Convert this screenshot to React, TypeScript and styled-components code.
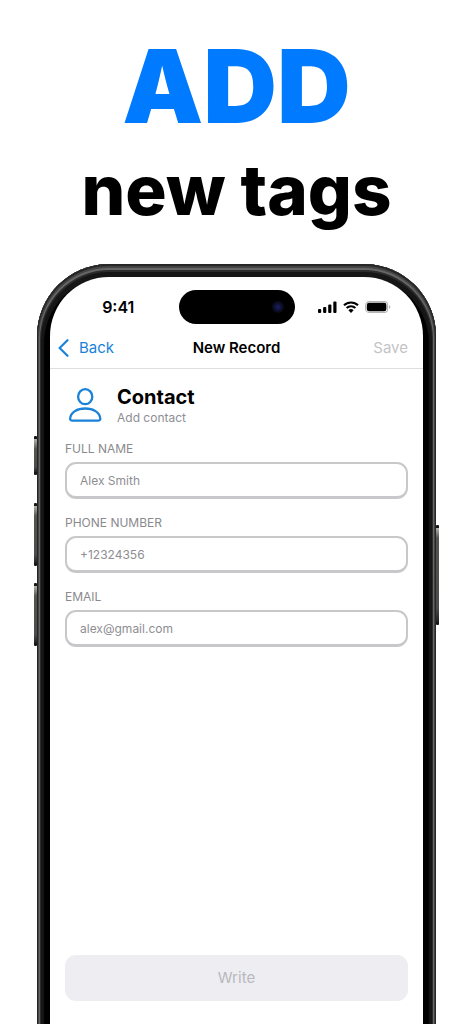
import React from "react";
import styled, { createGlobalStyle } from "styled-components";

const GlobalStyle = createGlobalStyle`
  * { box-sizing: border-box; }
  body {
    margin: 0;
    background: #ffffff;
    color: #000000;
    font-family: Inter, "Liberation Sans", sans-serif;
  }
`;

const Page = styled.main`
  display: flex;
  flex-direction: column;
  min-height: 100vh;
  overflow: hidden;
`;

const Headline = styled.h1`
  display: flex;
  flex-direction: column;
  align-items: center;
  margin: 0;
  padding: 34px 0 22px;
  white-space: nowrap;
`;

const HeadlineAccent = styled.span`
  font-size: 102px;
  line-height: 104px;
  font-weight: 900;
  color: #007aff;
`;

const HeadlineText = styled.span`
  font-size: 69px;
  line-height: 104px;
  font-weight: 800;
`;

const Phone = styled.section`
  position: relative;
  flex: 1;
  display: flex;
  margin: 0 37px;
  padding: 13px 13px 0;
  border-radius: 72px 72px 0 0;
  background: #000000;
  box-shadow:
    inset 0 1px 0 1px #262626,
    inset 0 2px 0 2px #444444,
    inset 0 3px 0 3px #666666,
    inset 0 4px 0 4px #2c2c2c,
    inset 0 7px 1px 7px #161616;
`;

const SideKey = styled.span<{ $side: "left" | "right"; $top: number; $length: number }>`
  position: absolute;
  ${(p) => p.$side}: -3px;
  top: ${(p) => p.$top}px;
  width: 3px;
  height: ${(p) => p.$length}px;
  border: solid #161616;
  border-width: 3px 0;
  border-radius: 1px;
  background: linear-gradient(#b5b5b0, #55544f 10px, #4c4c4a 85%, #222222);
`;

const Screen = styled.div`
  flex: 1;
  display: flex;
  flex-direction: column;
  min-width: 0;
  border-radius: 59px 59px 0 0;
  background: #ffffff;
`;

const StatusBar = styled.div`
  display: grid;
  grid-template-columns: 1fr 116px 1fr;
  align-items: center;
  padding-top: 13px;
`;

const Time = styled.time`
  padding-left: 8px;
  text-align: center;
  font-size: 16px;
  line-height: 20px;
  font-weight: 600;
`;

const Island = styled.div`
  display: flex;
  align-items: center;
  justify-content: flex-end;
  height: 34px;
  padding-right: 11px;
  border-radius: 17px;
  background: #000000;
`;

const Camera = styled.span`
  width: 12px;
  height: 12px;
  border-radius: 50%;
  background: radial-gradient(circle, #1b1f6b 0, #10123a 35%, #0a0a1a 60%, #07070c 100%);
`;

const StatusIcons = styled.div`
  display: flex;
  align-items: center;
  justify-content: center;
  gap: 6px;
  padding-right: 9px;
`;

const NavBar = styled.header`
  display: grid;
  grid-template-columns: 1fr auto 1fr;
  align-items: center;
  height: 45px;
  padding: 4px 15px 0 8px;
  border-bottom: 1px solid #dedee0;
`;

const NavLink = styled.a`
  display: flex;
  align-items: center;
  gap: 10px;
  font-size: 15px;
  line-height: 20px;
  color: #1a82d8;
  text-decoration: none;
`;

const NavTitle = styled.h2`
  margin: 0;
  padding-left: 7px;
  font-size: 15px;
  line-height: 20px;
  font-weight: 600;
`;

const SaveButton = styled.button`
  justify-self: end;
  padding: 0;
  border: 0;
  background: none;
  font: inherit;
  font-size: 15px;
  line-height: 20px;
  color: #c4c4c6;
`;

const Form = styled.form`
  flex: 1;
  display: flex;
  flex-direction: column;
  padding: 16px 15px 23px;
`;

const Intro = styled.div`
  display: flex;
  align-items: center;
  gap: 15px;
  height: 42px;
  padding-left: 4px;
`;

const IntroTitle = styled.h3`
  margin: 0;
  font-size: 20px;
  line-height: 24px;
  font-weight: 700;
`;

const IntroText = styled.p`
  margin: 0;
  font-size: 12px;
  line-height: 18px;
  color: #8e8e93;
`;

const Fields = styled.div`
  display: flex;
  flex-direction: column;
  gap: 17px;
  margin: 15px 0 auto;
`;

const Field = styled.label`
  display: flex;
  flex-direction: column;
  gap: 6px;
  font-size: 12px;
  line-height: 14px;
  color: #8a8a8e;
`;

const Input = styled.input`
  width: 100%;
  height: 37px;
  padding: 0 13px;
  border: 2px solid #c8c8cb;
  border-bottom-width: 3px;
  border-radius: 11px;
  background: #ffffff;
  font: inherit;
  font-size: 12px;
  color: #000000;
  outline: none;

  &::placeholder {
    color: #8e8e92;
    opacity: 1;
  }
`;

const WriteButton = styled.button`
  height: 46px;
  border: 0;
  border-radius: 11px;
  background: #eeedf2;
  font: inherit;
  font-size: 15px;
  line-height: 20px;
  color: #b9b9bd;
`;

const SignalIcon = () => (
  <svg width="19" height="12" viewBox="0 0 19 12" aria-hidden="true">
    <rect x="0" y="8" width="3.2" height="4" rx="1" />
    <rect x="5.1" y="6" width="3.2" height="6" rx="1" />
    <rect x="10.2" y="3.4" width="3.2" height="8.6" rx="1" />
    <rect x="15.3" y="0.4" width="3.2" height="11.6" rx="1" />
  </svg>
);

const WifiIcon = () => (
  <svg width="16" height="12" viewBox="0 0 16 12" aria-hidden="true">
    <path d="M1 4.3A10 10 0 0 1 15 4.3" fill="none" stroke="#000" strokeWidth="2.1" />
    <path d="M3.6 7A6.3 6.3 0 0 1 12.4 7" fill="none" stroke="#000" strokeWidth="2" />
    <path d="M8 12 5.4 9.3a3.8 3.8 0 0 1 5.2 0Z" />
  </svg>
);

const BatteryIcon = () => (
  <svg width="26" height="12" viewBox="0 0 26 12" aria-hidden="true">
    <rect x="0.6" y="0.6" width="22" height="10.8" rx="3.4" fill="none" stroke="#b5b5b5" strokeWidth="1.1" />
    <rect x="1.8" y="1.8" width="19.6" height="8.4" rx="2.2" />
    <path d="M24 4.2c.9.3 1.4 1 1.4 1.8s-.5 1.5-1.4 1.8Z" fill="#b5b5b5" />
  </svg>
);

const ChevronIcon = () => (
  <svg width="11" height="18" viewBox="0 0 11 18" aria-hidden="true">
    <path d="M9.5 1.2 1.6 9l7.9 7.8" fill="none" stroke="#1a82d8" strokeWidth="2.2" strokeLinecap="round" strokeLinejoin="round" />
  </svg>
);

const PersonIcon = () => (
  <svg width="33" height="36" viewBox="0 0 33 36" aria-hidden="true">
    <g fill="none" stroke="#1a82d8" strokeWidth="2.3">
      <ellipse cx="16.2" cy="8.7" rx="7.1" ry="7.5" />
      <path d="M3.4 32.6H29c1.6 0 2.500-.9 2.200-2.600C30.400 24.400 24.400 20.500 16.200 20.500S2 24.400 1.200 30c-.3 1.700.6 2.600 2.200 2.600Z" />
    </g>
  </svg>
);

const fields = [
  { label: "FULL NAME", placeholder: "Alex Smith", type: "text" },
  { label: "PHONE NUMBER", placeholder: "+12324356", type: "tel" },
  { label: "EMAIL", placeholder: "alex@gmail.com", type: "email" },
];

export default function App() {
  return (
    <Page>
      <GlobalStyle />
      <Headline>
        <HeadlineAccent>ADD</HeadlineAccent>
        <HeadlineText>new tags</HeadlineText>
      </Headline>
      <Phone>
        <SideKey $side="left" $top={172} $length={39} />
        <SideKey $side="left" $top={239} $length={63} />
        <SideKey $side="left" $top={319} $length={63} />
        <SideKey $side="right" $top={261} $length={100} />
        <Screen>
          <StatusBar>
            <Time>9:41</Time>
            <Island>
              <Camera />
            </Island>
            <StatusIcons>
              <SignalIcon />
              <WifiIcon />
              <BatteryIcon />
            </StatusIcons>
          </StatusBar>
          <NavBar>
            <NavLink href="#">
              <ChevronIcon />
              Back
            </NavLink>
            <NavTitle>New Record</NavTitle>
            <SaveButton type="button">Save</SaveButton>
          </NavBar>
          <Form>
            <Intro>
              <PersonIcon />
              <div>
                <IntroTitle>Contact</IntroTitle>
                <IntroText>Add contact</IntroText>
              </div>
            </Intro>
            <Fields>
              {fields.map((field) => (
                <Field key={field.label}>
                  {field.label}
                  <Input type={field.type} placeholder={field.placeholder} />
                </Field>
              ))}
            </Fields>
            <WriteButton type="button">Write</WriteButton>
          </Form>
        </Screen>
      </Phone>
    </Page>
  );
}
